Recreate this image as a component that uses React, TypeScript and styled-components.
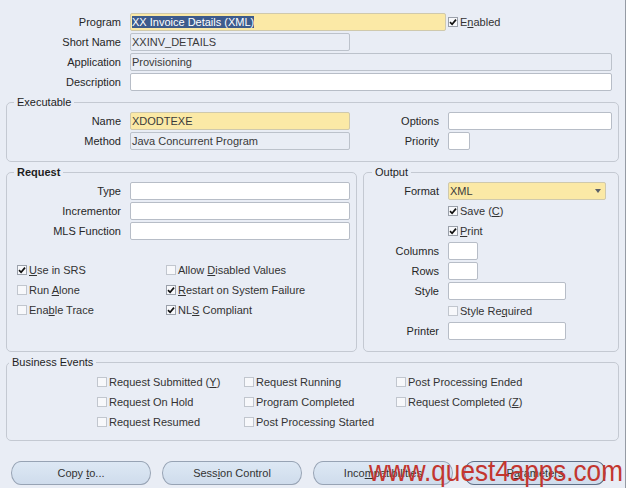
import React from "react";
import styled, { createGlobalStyle } from "styled-components";

const GlobalStyle = createGlobalStyle`
  html, body { margin: 0; padding: 0; background: #ffffff; }
  body { font-family: "Liberation Sans", Arial, sans-serif; font-size: 11px; }
`;

const Page = styled.div`
  position: relative;
  width: 626px;
  height: 488px;
  box-sizing: border-box;
  background: #e9edf5;
  border-right: 1px solid #959ba4;
  padding-top: 13px;
  overflow: hidden;
  color: #262626;
`;

const Stack = styled.div`
  display: flex;
  flex-direction: column;
  gap: 2px;
`;

const Row = styled.div<{ $indent?: number }>`
  display: flex;
  align-items: center;
  height: 18px;
  padding-left: ${(p) => p.$indent ?? 0}px;
`;

const Label = styled.span<{ $w: number }>`
  flex: none;
  width: ${(p) => p.$w}px;
  box-sizing: border-box;
  padding-right: 9px;
  text-align: right;
  white-space: nowrap;
  color: #262626;
`;

type Tone = "yellow" | "gray" | "white";
const toneBg: Record<Tone, string> = { yellow: "#fbe9a6", gray: "#e9edf5", white: "#ffffff" };
const toneBorder: Record<Tone, string> = { yellow: "#cfc9ad", gray: "#bcc2cb", white: "#b7bdc7" };

const Field = styled.div<{ $w: number; $tone: Tone }>`
  position: relative;
  flex: none;
  width: ${(p) => p.$w}px;
  height: 18px;
  box-sizing: border-box;
  border: 1px solid ${(p) => toneBorder[p.$tone]};
  border-radius: 2px;
  background: ${(p) => toneBg[p.$tone]};
  padding: 0 1px;
  line-height: 16px;
  color: #3a3a3a;
  white-space: nowrap;
  overflow: hidden;
`;

const Selected = styled.span`
  background: #3d5b8c;
  color: #ffffff;
`;

const DropArrow = styled.span`
  position: absolute;
  right: 4px;
  top: 6px;
  width: 0;
  height: 0;
  border-left: 3px solid transparent;
  border-right: 3px solid transparent;
  border-top: 4px solid #5a5f68;
`;

const Mn = styled.span`
  text-decoration: underline;
  text-underline-offset: 1px;
`;

const CheckWrap = styled.span<{ $ml?: number }>`
  display: inline-flex;
  align-items: center;
  margin-left: ${(p) => p.$ml ?? 0}px;
  white-space: nowrap;
  color: #333;
`;

const CheckText = styled.span`
  white-space: pre;
`;

const Box = styled.span<{ $on: boolean }>`
  flex: none;
  display: inline-flex;
  align-items: center;
  justify-content: center;
  width: 10px;
  height: 10px;
  box-sizing: border-box;
  margin-right: 2px;
  border: 1px solid ${(p) => (p.$on ? "#9aa0aa" : "#c1c6ce")};
  background: #f7f8fb;
`;

const Check: React.FC<{ on?: boolean; ml?: number; children: React.ReactNode }> = ({ on = false, ml, children }) => (
  <CheckWrap $ml={ml}>
    <Box $on={on}>
      {on && (
        <svg width="8" height="8" viewBox="0 0 8 8">
          <path d="M1 4.2 L3.1 6.3 L7 1.6" fill="none" stroke="#111" strokeWidth="1.7" />
        </svg>
      )}
    </Box>
    <CheckText>{children}</CheckText>
  </CheckWrap>
);

const Group = styled.fieldset<{ $w: number; $pt: number; $pb: number }>`
  margin: 0;
  width: ${(p) => p.$w}px;
  box-sizing: border-box;
  min-width: 0;
  border: 1px solid #c4c9d2;
  border-radius: 5px;
  padding: ${(p) => p.$pt}px 0 ${(p) => p.$pb}px 0;
`;

const Legend = styled.legend<{ $ml: number; $bold?: boolean }>`
  margin-left: ${(p) => p.$ml}px;
  padding: 0 3px;
  line-height: 12px;
  font-weight: ${(p) => (p.$bold ? 700 : 400)};
  color: #1e1e1e;
`;

const Section = styled.div<{ $mt: number }>`
  margin-top: ${(p) => p.$mt}px;
  margin-left: 6px;
`;

const SplitRow = styled.div`
  display: flex;
  align-items: stretch;
  gap: 6px;
  margin-top: 4px;
  margin-left: 6px;
`;

const Columns = styled.div`
  display: flex;
`;

const Col = styled.div<{ $w?: number }>`
  width: ${(p) => (p.$w ? `${p.$w}px` : "auto")};
  flex: none;
`;

const CheckGrid = styled.div<{ $cols: string; $pl: number; $mt: number }>`
  display: grid;
  grid-template-columns: ${(p) => p.$cols};
  grid-auto-rows: 18px;
  row-gap: 2px;
  align-items: center;
  padding-left: ${(p) => p.$pl}px;
  margin-top: ${(p) => p.$mt}px;
`;

const ButtonBar = styled.div`
  display: flex;
  gap: 11px;
  margin-top: 20px;
  padding-left: 11px;
`;

const Button = styled.button<{ $w: number; $focus?: boolean }>`
  width: ${(p) => p.$w}px;
  height: 24px;
  box-sizing: border-box;
  border: ${(p) => (p.$focus ? "1.5px solid #5f6f86" : "1px solid #97a3b4")};
  border-radius: 10px / 12px;
  background: linear-gradient(#dde8f4, #cfdcec);
  font-family: "Liberation Sans", Arial, sans-serif;
  font-size: 11px;
  color: #333;
  padding: 0;
`;

const Watermark = styled.div`
  position: absolute;
  left: 369px;
  top: 456px;
  font-family: "Liberation Sans", Arial, sans-serif;
  font-size: 30px;
  line-height: 30px;
  color: #c3362f;
  white-space: nowrap;
  transform: scaleX(0.87);
  transform-origin: left top;
  pointer-events: none;
`;

export default function App() {
  return (
    <>
      <GlobalStyle />
      <Page>
        <Stack>
          <Row>
            <Label $w={130}>Program</Label>
            <Field $w={316} $tone="yellow">
              <Selected>XX Invoice Details (XML)</Selected>
            </Field>
            <Check on ml={2}>
              E<Mn>n</Mn>abled
            </Check>
          </Row>
          <Row>
            <Label $w={130}>Short Name</Label>
            <Field $w={220} $tone="gray">XXINV_DETAILS</Field>
          </Row>
          <Row>
            <Label $w={130}>Application</Label>
            <Field $w={482} $tone="gray">Provisioning</Field>
          </Row>
          <Row>
            <Label $w={130}>Description</Label>
            <Field $w={482} $tone="white" />
          </Row>
        </Stack>

        <Section $mt={5}>
          <Group $w={613} $pt={4} $pb={11}>
            <Legend $ml={7}>Executable</Legend>
            <Columns>
              <Col $w={343}>
                <Stack>
                  <Row>
                    <Label $w={123}>Name</Label>
                    <Field $w={220} $tone="yellow">XDODTEXE</Field>
                  </Row>
                  <Row>
                    <Label $w={123}>Method</Label>
                    <Field $w={220} $tone="gray">Java Concurrent Program</Field>
                  </Row>
                </Stack>
              </Col>
              <Col>
                <Stack>
                  <Row>
                    <Label $w={98}>Options</Label>
                    <Field $w={164} $tone="white" />
                  </Row>
                  <Row>
                    <Label $w={98}>Priority</Label>
                    <Field $w={22} $tone="white" />
                  </Row>
                </Stack>
              </Col>
            </Columns>
          </Group>
        </Section>

        <SplitRow>
          <Group $w={351} $pt={4} $pb={11}>
            <Legend $ml={7} $bold>Request</Legend>
            <Stack>
              <Row>
                <Label $w={123}>Type</Label>
                <Field $w={220} $tone="white" />
              </Row>
              <Row>
                <Label $w={123}>Incrementor</Label>
                <Field $w={220} $tone="white" />
              </Row>
              <Row>
                <Label $w={123}>MLS Function</Label>
                <Field $w={220} $tone="white" />
              </Row>
            </Stack>
            <CheckGrid $cols="149px auto" $pl={10} $mt={21}>
              <Check on>
                <Mn>U</Mn>se in SRS
              </Check>
              <Check>
                Allow <Mn>D</Mn>isabled Values
              </Check>
              <Check>
                Run <Mn>A</Mn>lone
              </Check>
              <Check on>
                <Mn>R</Mn>estart on System Failure
              </Check>
              <Check>
                Ena<Mn>b</Mn>le Trace
              </Check>
              <Check on>
                NL<Mn>S</Mn> Compliant
              </Check>
            </CheckGrid>
          </Group>

          <Group $w={256} $pt={4} $pb={11}>
            <Legend $ml={8}>Output</Legend>
            <Stack>
              <Row>
                <Label $w={84}>Format</Label>
                <Field $w={158} $tone="yellow">
                  XML
                  <DropArrow />
                </Field>
              </Row>
              <Row $indent={84}>
                <Check on>
                  Save (<Mn>C</Mn>)
                </Check>
              </Row>
              <Row $indent={84}>
                <Check on>
                  <Mn>P</Mn>rint
                </Check>
              </Row>
              <Row>
                <Label $w={84}>Columns</Label>
                <Field $w={30} $tone="white" />
              </Row>
              <Row>
                <Label $w={84}>Rows</Label>
                <Field $w={30} $tone="white" />
              </Row>
              <Row>
                <Label $w={84}>Style</Label>
                <Field $w={118} $tone="white" />
              </Row>
              <Row $indent={84}>
                <Check>
                  Style Re<Mn>q</Mn>uired
                </Check>
              </Row>
              <Row>
                <Label $w={84}>Printer</Label>
                <Field $w={118} $tone="white" />
              </Row>
            </Stack>
          </Group>
        </SplitRow>

        <Section $mt={4}>
          <Group $w={613} $pt={5} $pb={9}>
            <Legend $ml={2}>Business Events</Legend>
            <CheckGrid $cols="147px 152px auto" $pl={90} $mt={0}>
              <Check>
                Request Submitted (<Mn>Y</Mn>)
              </Check>
              <Check>Request Running</Check>
              <Check>Post Processing Ended</Check>
              <Check>Request On Hold</Check>
              <Check>Program Completed</Check>
              <Check>
                Request Completed (<Mn>Z</Mn>)
              </Check>
              <Check>Request Resumed</Check>
              <Check>Post Processing Started</Check>
            </CheckGrid>
          </Group>
        </Section>

        <ButtonBar>
          <Button $w={140}>
            Copy <Mn>t</Mn>o...
          </Button>
          <Button $w={140}>
            Sess<Mn>i</Mn>on Control
          </Button>
          <Button $w={140}>
            Inco<Mn>m</Mn>patibilities
          </Button>
          <Button $w={142} $focus>
            P<Mn>a</Mn>rameters
          </Button>
        </ButtonBar>

        <Watermark>www.quest4apps.com</Watermark>
      </Page>
    </>
  );
}
